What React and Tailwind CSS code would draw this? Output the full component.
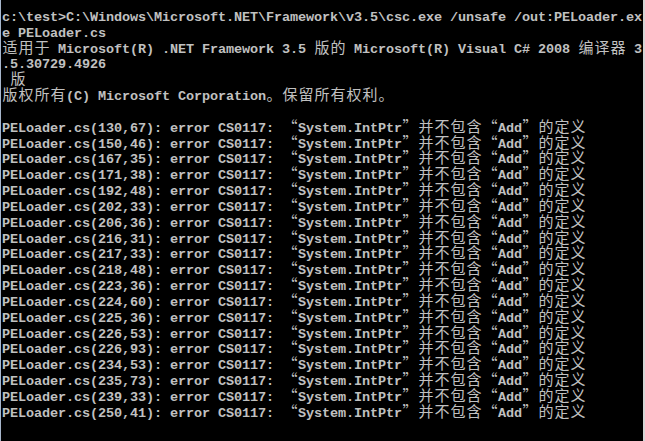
const lines = [
  'c:\\test>C:\\Windows\\Microsoft.NET\\Framework\\v3.5\\csc.exe /unsafe /out:PELoader.ex',
  'e PELoader.cs',
  '适用于 Microsoft(R) .NET Framework 3.5 版的 Microsoft(R) Visual C# 2008 编译器 3',
  '.5.30729.4926',
  ' 版',
  '版权所有(C) Microsoft Corporation。保留所有权利。',
  '',
]

const errors = [
  '130,67', '150,46', '167,35', '171,38', '192,48', '202,33', '206,36',
  '216,31', '217,33', '218,48', '223,36', '224,60', '225,36', '226,53',
  '226,93', '234,53', '235,73', '239,33', '250,41',
]

// console cells: ascii is one column (8px), cjk + fullwidth punctuation is two
const isWide = (ch) => ch.charCodeAt(0) >= 0x2000

const ConsoleLine = ({ text }) => {
  return (
    <div className="flex h-[15.83px] items-baseline">
      {Array.from(text).map((ch, i) =>
        isWide(ch) ? (
          <span
            key={i}
            className="w-4 shrink-0 text-center text-[15px] leading-[10px] font-normal"
            style={{ fontFamily: '"Noto Sans CJK SC", sans-serif' }}
          >
            {ch}
          </span>
        ) : (
          <span
            key={i}
            className="w-2 shrink-0 text-center text-[13.5px] leading-[15.83px] font-bold whitespace-pre"
            style={{ fontFamily: '"Liberation Mono", monospace' }}
          >
            {ch}
          </span>
        )
      )}
    </div>
  )
}

export default function App() {
  const all = [
    ...lines,
    ...errors.map((pos) => `PELoader.cs(${pos}): error CS0117: “System.IntPtr”并不包含“Add”的定义`),
  ]

  return (
    <div className="w-[645px] h-[441px] overflow-hidden bg-black border-l border-l-[#a7b6cb] border-r-2 border-r-[#d6d6d6] text-[#c0c0c0]">
      <div className="pt-[10px] pl-px">
        {all.map((t, i) => (
          <ConsoleLine key={i} text={t} />
        ))}
      </div>
    </div>
  )
}
